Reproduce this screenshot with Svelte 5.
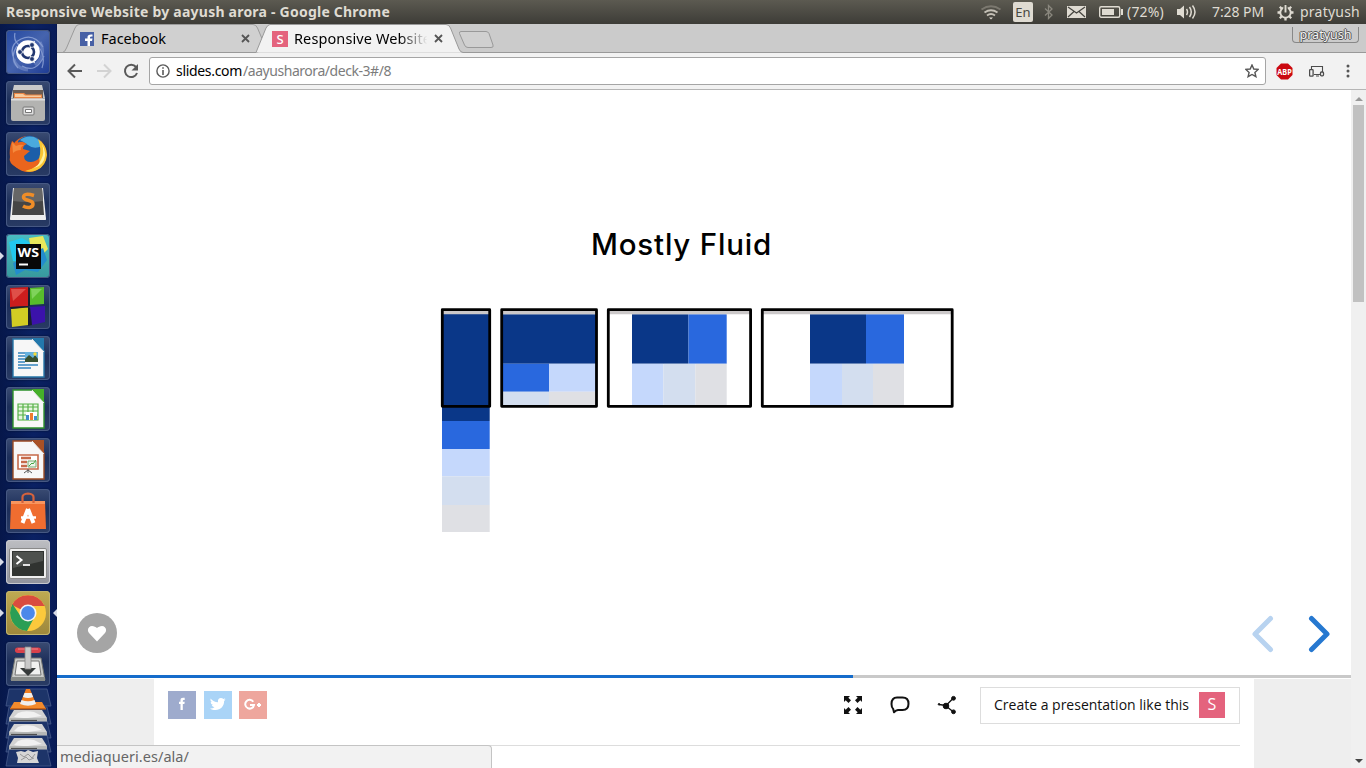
<script>
  // Tightens or loosens tracking so a label fills its slot exactly.
  function fit(node, width) {
    const apply = () => {
      node.style.letterSpacing = '0px';
      const natural = node.getBoundingClientRect().width;
      node.style.letterSpacing = `${(width - natural) / node.textContent.length}px`;
    };
    apply();
    document.fonts?.ready.then(apply);
  }

  const apps = [
    'dash', 'files', 'firefox', 'sublime', 'webstorm', 'blocks', 'writer',
    'calc', 'impress', 'software', 'terminal', 'chrome', 'transmission'
  ];
  const running = ['webstorm', 'terminal', 'chrome'];
</script>

{#snippet doc(edge, fold)}
  <path d="M7 3h20l11 12v26H7z" fill="#f7f7f7" stroke={edge} stroke-width="1.4" />
  <path d="M26 2h12v14z" fill={fold} />
  <path d="M26 3l12 13" stroke="#e6e6e6" stroke-width="1" />
{/snippet}

<div class="desktop">
  <header class="panel">
    <b class="title"><span use:fit={384}>Responsive Website by aayush arora - Google Chrome</span></b>
    <div class="indicators">
      <svg class="wifi" width="22" height="18" viewBox="0 0 22 18" fill="none" stroke-width="1.8">
        <path d="M1.500 6.500Q11 0 20.500 6.500" stroke="#7b786f" />
        <path d="M4.500 9.500Q11 5 17.500 9.500M7 12.500Q11 9.500 15 12.500" stroke="#c5c1b7" />
        <path d="M9 14.500h4l-2 2z" fill="#dfdbd2" />
      </svg>
      <span class="lang">En</span>
      <svg class="bt" width="10" height="16" viewBox="0 0 10 16"><path d="M1 4.500l7 6.500-3.500 3.500V1.500L8 5 1 11.500" fill="none" stroke="#8a877e" stroke-width="1.300" /></svg>
      <svg class="mail" width="19" height="14" viewBox="0 0 19 14"><path d="M0 1h19v12H0z" fill="#dfdbd2" /><path d="M1 2l8.500 6L18 2M1 12l6-5.500M18 12l-6-5.500" fill="none" stroke="#45443f" stroke-width="1.200" /></svg>
      <svg class="batt" width="24" height="14" viewBox="0 0 24 14"><rect x=".7" y="1.700" width="20" height="10.600" rx="1.500" fill="none" stroke="#dfdbd2" stroke-width="1.400" /><path d="M3 4h12v6H3zM22 4h2v6h-2z" fill="#dfdbd2" /></svg>
      <span class="pct"><span use:fit={37}>(72%)</span></span>
      <svg class="vol" width="21" height="16" viewBox="0 0 21 16"><path d="M1 5h3l4-3.500v13L4 11H1z" fill="#dfdbd2" /><path d="M10.500 5q2 3 0 6M13.500 3q3.500 5 0 10M16.500 1.500q5 6.500 0 13" fill="none" stroke="#dfdbd2" stroke-width="1.500" /></svg>
      <span class="clock"><span use:fit={52}>7:28 PM</span></span>
      <svg class="gear" width="17" height="17" viewBox="0 0 17 17" fill="none" stroke="#dfdbd2">
        <circle cx="8.500" cy="8.500" r="5.200" stroke-width="1.900" />
        <path d="M.5 8.500h3M13.500 8.500h3M2.800 2.800l2 2M14.200 2.800l-2 2M2.800 14.200l2-2M14.200 14.200l-2-2M8.500 13v3.500" stroke-width="2.300" />
        <path d="M8.500 0v8" stroke="#4d4c44" stroke-width="4.400" /><path d="M8.500 1v7.500" stroke-width="1.900" />
      </svg>
      <span class="user"><span use:fit={60}>pratyush</span></span>
    </div>
  </header>

  <div class="workspace">
    <nav class="launcher">
      {#each apps as app (app)}
        <div class={['tile', app]}>
          {#if running.includes(app)}<i class="pip"></i>{/if}
          {#if app === 'chrome'}<i class="pip focus"></i>{/if}
          <svg width="44" height="44" viewBox="0 0 44 44">
            {#if app === 'dash'}
              <g fill="none" stroke="#aabce7" opacity=".65">
                <path d="M9 3q-2 9 6 13M8 29Q2 15 15 9t22 8M36 38q4-12-4-22M12 38q-9-11-1-22M16 36q14 8 22-10" stroke-width="1.200" />
                <path d="M34 12q7 13-5 23M8 29q1 9 14 11" stroke-width="3" opacity=".5" />
              </g>
              <circle cx="22" cy="22" r="11.800" fill="#fff" />
              <circle cx="22" cy="22" r="6" fill="none" stroke="#20366f" stroke-width="2.600" />
              <path d="M18 22H10M24 18.500l4.500-7.500M24 25.500l4.500 7.500" stroke="#fff" stroke-width="1.200" />
              <g fill="#20366f" stroke="#fff" stroke-width=".7"><circle cx="14" cy="22" r="2.400" /><circle cx="26" cy="15" r="2.400" /><circle cx="26" cy="29" r="2.400" /></g>
            {:else if app === 'files'}
              <path d="M8 4h28l3 13H5z" fill="#c9c9c9" /><path d="M7 9h30v9H7z" fill="#6a5d55" />
              <path d="M8 12h10l2 1.500h16v5H8z" fill="#e98544" /><path d="M9 13h8l2 1.500h16v1.500H9z" fill="#f8cc9e" />
              <path d="M5 17.500h34V38q0 2-2 2H7q-2 0-2-2z" fill="#b3b3b1" /><path d="M5 17.500h34v2H5z" fill="#dedede" />
              <rect x="17" y="26" width="11" height="8" rx="1" fill="#ddd" stroke="#777" /><path d="M19.500 28.500h6v3h-6z" fill="#fff" stroke="#777" />
            {:else if app === 'firefox'}
              <circle cx="22.500" cy="22" r="18" fill="#e8641c" />
              <path d="M12 9Q18 3 26 4q10 2 12 12 1 9-5 15-8 4-15-2-6-8-6-20z" fill="#1c5ea9" />
              <path d="M14 8q6-5 14-3 7 3 8 9-8 4-14-1-4-3-8-5z" fill="#4aaade" />
              <path d="M32 7q9 6 9 16-1 11-10 15-6 3-12 1 12-3 14-12 3-10-1-20z" fill="#f9c533" />
              <path d="M36 12q3 9-1 16-3 6-9 8 9-1 12-8t-2-16z" fill="#fff2a0" />
              <path d="M6 9l4 3q5-4 9-1l2 1q-4 1-4 5l7 2-6 5q0 6 7 6 6-1 8-4 2 6-4 9-9 6-18 1T4 25q-1-9 2-16z" fill="#ea651d" />
              <path d="M6 10l4 4q4-2 8-1-4 2-3 5-5 0-8 3z" fill="#f58a3d" />
            {:else if app === 'sublime'}
              <path d="M7 5h30l3 31H4z" fill="#eee" /><path d="M8 5h28l2 27H6z" fill="#454545" /><path d="M8 5h28l1 13q-15 2-30 0z" fill="#666" />
              <path d="M28 12.500q-10-3-10.500 1.500c0 4.500 9.500 2 9.500 7 0 4-6 4.500-10 2" fill="none" stroke="#ef8d27" stroke-width="3.500" />
              <path d="M5 33h34l1 4H4z" fill="#ededed" />
            {:else if app === 'webstorm'}
              <path d="M3 8l13-4 12 7-3 18-18-2z" fill="#22c8ee" /><path d="M23 4l14-2 5 13-8 8-9-7z" fill="#e8e85b" />
              <path d="M7 29l30-15 4 12-9 12-13-2-9 5z" fill="#238ccc" />
              <path d="M10 10h25v25H10z" fill="#080808" /><path d="M13 29.500h9v2h-9z" fill="#fff" />
              <text x="11.500" y="23" font-size="13" font-weight="700" textLength="21.500" lengthAdjust="spacingAndGlyphs" fill="#fff">WS</text>
            {:else if app === 'blocks'}
              <path d="M4 3l18-1v19l-18 1z" fill="#cc1d1d" /><path d="M24 3l14-1v17l-14 1z" fill="#58bc2c" />
              <path d="M5 24l17-2v18L6 42z" fill="#d2cd24" /><path d="M24 22l15-1v16l-13 3z" fill="#3b12aa" />
              <path d="M22 2l2 1v18l-2 1zM22 22l2 1 2 17-4 1zM4 22l18-1v1.500L5 24z" fill="#16161c" opacity=".75" />
              <path d="M5 4h15l-13 12z" fill="#eb7168" opacity=".6" /><path d="M25 4h11l-10 10z" fill="#99e27b" opacity=".6" />
            {:else if app === 'writer'}
              {@render doc('#2676a8', '#2378ac')}
              <path d="M12 17h7M12 20h7M12 23h7M12 26h7M12 29h20M12 32h13" stroke="#3585bf" stroke-width="1.700" />
              <path d="M19 16h13v9H19z" fill="#66b2df" /><path d="M19 23l4-4 4 3 2-3 3 4v3H19z" fill="#37502e" /><circle cx="29" cy="18" r="1.700" fill="#f6dc3a" />
            {:else if app === 'calc'}
              {@render doc('#2d912b', '#45af29')}
              <path d="M12 17h20v17H12z" fill="#e7f5e0" /><path d="M12 17h20v16H12zM12 20h20M12 24h20M12 28h20M17 17v16M22 17v16M27 17v16" fill="none" stroke="#55b146" stroke-width="1.200" />
              <path d="M20 25h11v8H20z" fill="#fff" /><path d="M20 33v-5h3v5z" fill="#438bc8" /><path d="M24 33v-7h3v7z" fill="#ef7b30" /><path d="M28 33v-4h3v4z" fill="#4192ce" />
            {:else if app === 'impress'}
              {@render doc('#9a4a24', '#a95126')}
              <path d="M12 17h20v14H12z" fill="#fff" stroke="#c66a4a" stroke-width="1.600" /><path d="M15 20h10M15 24h6M15 28h6" stroke="#c66a4a" stroke-width="2.500" />
              <path d="M22 23h8v6h-8z" fill="#eef6ed" stroke="#76a971" /><path d="M23 28l3-3 1 1 3-4" fill="none" stroke="#48a545" /><path d="M18 35l4-3 4 3M22 31v4" fill="none" stroke="#555" />
            {:else if app === 'software'}
              <path d="M5 12h34l1 28H4z" fill="#ef6d30" /><path d="M5 12h34v3H5z" fill="#f8955e" />
              <path d="M16.500 14V8q0-3 5.500-3.500 5.500.5 5.500 3.500v6" fill="none" stroke="#d5623c" stroke-width="2.200" />
              <path d="M22 20l-5.500 14M22 20l5.500 14" fill="none" stroke="#fff" stroke-width="4" /><path d="M15 28.500h15" stroke="#fff" stroke-width="2.500" />
            {:else if app === 'terminal'}
              <rect x="3.500" y="8.500" width="37" height="30" rx="1.500" fill="#efefef" stroke="#898989" /><path d="M6 11h32v25H6z" fill="#303330" /><path d="M7 12h30v9L7 28z" fill="#4e514e" />
              <path d="M10.500 16l5 4-5 4" fill="none" stroke="#fff" stroke-width="2" /><path d="M17 25h7" stroke="#fff" stroke-width="1.700" />
            {:else if app === 'chrome'}
              <circle cx="22" cy="22" r="18" fill="#fbc93c" />
              <path d="M22 22L6 14A18 18 0 0 1 38 14l1 1H22z" fill="#d94c3f" />
              <path d="M22 22L29 25 21 40A18 18 0 0 1 6.500 13l8 12z" fill="#2b9e55" />
              <circle cx="22" cy="22" r="8.500" fill="#f4f4f4" /><circle cx="22" cy="22" r="6.900" fill="#4b88ea" />
            {:else}
              <path d="M9 16h26l4 22H5z" fill="#c9cac8" stroke="#727370" /><path d="M11 19h22l2 14H9z" fill="#f1f1f0" stroke="#777" />
              <path d="M14 26h16l-8 8z" fill="#363a3a" />
              <rect x="9" y="5.500" width="26" height="5.500" rx="2.700" fill="#d8414b" /><path d="M12 7h20" stroke="#f2868a" />
              <path d="M19 5h6v22h-6z" fill="#c9c9c9" stroke="#888" stroke-width=".8" /><path d="M5 35h34v4H5z" fill="#888b88" />
            {/if}
          </svg>
        </div>
      {/each}
      <svg class="stack" width="57" height="80" viewBox="0 0 57 80">
        {#each [1, 19, 33, 47, 61] as y (y)}
          <path d="M9 {y}h38l4 17H6z" fill="#1d3469" stroke="#485b8a" stroke-width=".8" />
        {/each}
        {#each [50, 36, 22] as y (y)}
          <path d="M14 {y}h28l5 8H9z" fill="#d2d2d2" /><path d="M18 {y + 3}q6-3 16-1l8 4-14 2q-9 0-14-1z" fill="#f1f1f1" /><path d="M9 {y + 8}h38v3.500H9z" fill="#b5b7b6" /><path d="M11 {y + 10.500}h26" stroke="#4e4e4e" stroke-width="1.200" />
        {/each}
        <path d="M16 64l5-1 4 1 3-2 5 2 5-1-1 7 2 5H17l1-5z" fill="#d6d6d6" /><path d="M20 66l4 3 4-3 4 4 3-4M21 72l5-3 3 3 5-2" fill="none" stroke="#979797" />
        <path d="M14 14h28l4 7H10z" fill="#f28a2c" /><path d="M10 20h36v1.500H10z" fill="#ca6314" />
        <path d="M26 1h4l6 15q-8 3.500-16 0z" fill="#f17f22" />
        <path d="M24.500 5h7l1.600 4q-5 2-10.200 0zM21.500 12q6.500 2.500 13 0l1.500 4q-8 3.500-16 0z" fill="#efefef" />
      </svg>
    </nav>

    <main class="browser">
      <div class="tabs">
        <svg class="shapes" width="1309" height="29" viewBox="0 0 1309 29">
          <path d="M5.500 28.500Q8 28 9.500 24L18 4Q19.500.5 22 .5H196Q199 .5 200.500 4L206 17 201 28.500z" fill="#d0d0d0" stroke="#9b9b9b" />
          <path d="M0 28.500H199L209 4Q211 .5 213 .5H389Q392 .5 393.500 4L402 25Q403.500 28.500 406 28.500H1309" fill="#f2f2f2" stroke="#999" />
          <path d="M404 7.500H429Q431 7.500 432 9.500L436 21Q437 23.500 434 23.500H411Q408.500 23.500 407.500 21L402.500 9.500Q402 7.500 404 7.500z" fill="#d0d0d0" stroke="#999" />
        </svg>
        <div class="tab one">
          <svg width="14" height="14" viewBox="0 0 14 14"><path d="M0 0h14v14H0z" fill="#4760a5" /><path d="M7.500 14V9H5V6.500h2.500V5q0-3 5-2.500v2q-2.500-.3-2.500 1v1h2.500L12 9h-2v5z" fill="#fff" /></svg>
          <span class="name"><span use:fit={65}>Facebook</span></span>
          <svg class="x" width="9" height="9" viewBox="0 0 9 9"><path d="M1 1l7 7M8 1L1 8" /></svg>
        </div>
        <div class="tab two">
          <span class="fav">S</span>
          <span class="name faded"><span use:fit={137}>Responsive Website</span></span>
          <svg class="x" width="9" height="9" viewBox="0 0 9 9"><path d="M1 1l7 7M8 1L1 8" /></svg>
        </div>
        <div class="profile"><span use:fit={52}>pratyush</span></div>
      </div>

      <div class="toolbar">
        <svg width="16" height="16" viewBox="0 0 16 16" fill="none" stroke="#5a5a5a" stroke-width="2"><path d="M15 8H2M8 1.500L1.500 8 8 14.500" /></svg>
        <svg class="fwd" width="16" height="16" viewBox="0 0 16 16" fill="none" stroke="#d3d3d3" stroke-width="2"><path d="M1 8h13M8 1.500L14.500 8 8 14.500" /></svg>
        <svg class="reload" width="16" height="16" viewBox="0 0 16 16"><path d="M13 4A6.200 6.200 0 1 0 14 10" fill="none" stroke="#5a5a5a" stroke-width="2" /><path d="M15 1v6.500H8.500z" fill="#5a5a5a" /></svg>
        <div class="omnibox">
          <svg width="14" height="14" viewBox="0 0 14 14"><circle cx="7" cy="7" r="6.100" fill="none" stroke="#5a5a5a" stroke-width="1.400" /><path d="M6.200 3.200h1.600v1.600H6.200zM6.200 6h1.600v5H6.200z" fill="#5a5a5a" /></svg>
          <span class="host"><span use:fit={66}>slides.com</span></span><span class="path"><span use:fit={148}>/aayusharora/deck-3#/8</span></span>
          <svg class="star" width="14" height="14" viewBox="0 0 14 14"><path d="M7 1l1.800 4 4.400.4-3.300 3 1 4.300L7 10.500l-3.900 2.200 1-4.300-3.300-3L5.200 5z" fill="none" stroke="#555" stroke-width="1.400" /></svg>
        </div>
        <svg class="abp" width="17" height="17" viewBox="0 0 17 17"><path d="M5 .5h7l4.500 4.500v7L12 16.500H5L.5 12V5z" fill="#cb0810" /><text x="1.300" y="11.800" font-size="9" font-weight="700" textLength="14.400" lengthAdjust="spacingAndGlyphs" fill="#fff">ABP</text></svg>
        <svg class="devices" width="16" height="13" viewBox="0 0 16 13" fill="none" stroke="#4c4c4c"><path d="M2.500 4V1.500h11V7M5 9.500h6M7 11h3" stroke-width="1.100" /><rect x=".6" y="4.600" width="3.500" height="6.500" rx=".7" stroke-width="1.300" /><rect x="11.500" y="7" width="3" height="3.800" rx="1" stroke-width="1.300" /></svg>
        <svg class="dots" width="4" height="14" viewBox="0 0 4 14" fill="#555"><circle cx="2" cy="2" r="1.500" /><circle cx="2" cy="7" r="1.500" /><circle cx="2" cy="12" r="1.500" /></svg>
      </div>

      <div class="viewport">
        <div class="page">
          <section class="slide">
            <h1><span use:fit={181}>Mostly Fluid</span></h1>
            <svg class="diagram" width="514" height="226" viewBox="440 307 514 226">
              <g fill="#0a3788">
                <path d="M442 314h47.700v107H442zM502 314.300h94v49.400h-94zM632 314.300h56.500v49.400h-56.500zM810 314.300h56v49.400h-56z" />
              </g>
              <path d="M442 421h47.700v28H442zM502 363.700h47v28h-47zM688.500 314.300h38.200v49.400h-38.200zM866 314.300h38v49.400h-38z" fill="#2968de" />
              <path d="M442 449h47.700v27.300H442zM549 363.700h47v28h-47zM632 363.700h31.300V405H632zM810 363.700h32V405h-32z" fill="#c5d8fc" />
              <path d="M442 476.300h47.700v28.700H442zM502 391.700h47V405h-47zM663.300 363.700h32V405h-32zM842 363.700h31V405h-31z" fill="#d3deef" />
              <path d="M442 505h47.700v27H442zM549 391.700h47V405h-47zM695.300 363.700h31.400V405h-31.400zM873 363.700h31V405h-31z" fill="#dfe0e4" />
              <path d="M443 311h46v3.300h-46zM502 311h94v3.300h-94zM609 311h142v3.300H609zM763 311h189v3.300H763z" fill="#cbc8c9" />
              <g fill="none" stroke="#000" stroke-width="2.800" stroke-linejoin="round">
                <path d="M442.300 309.700h47.400v96.600h-47.400zM501.700 309.700h94.800v96.600h-94.800zM608.300 309.700h142.300v96.600H608.300zM762.300 309.700h189.900v96.600H762.300z" />
              </g>
            </svg>
            <div class="like"><svg width="20" height="18" viewBox="0 0 20 18"><path d="M10 17.500L2 9C-.7 5.500 2 2 5 2c2 0 3.800 1 5 2 1.200-1 3-2 5-2 3 0 5.700 3.500 3 7z" fill="#fff" /></svg></div>
            <svg class="arrows" width="78" height="40" viewBox="0 0 78 40" fill="none" stroke-width="5" stroke-linecap="round" stroke-linejoin="round"><path d="M18.500 4.500L3 20l15.500 15.500" stroke="#b8d3f0" /><path d="M59.500 4.500L75 20 59.500 35.500" stroke="#2678d0" /></svg>
          </section>
          <div class="progress"><div class="done"></div></div>
          <div class="below">
            <div class="sheet">
              <div class="row">
                <div class="social">
                  <svg width="28" height="28" viewBox="0 0 28 28"><path d="M0 0h28v28H0z" fill="#9eabcd" /><path d="M12.500 19v-6H11v-2.300h1.500V9q0-2.300 2.600-2.300h1.600V9h-1q-.9 0-.9.900v.8h1.900l-.3 2.300h-1.600v6z" fill="#fff" /></svg>
                  <svg class="tw" width="28" height="28" viewBox="0 0 28 28"><path d="M0 0h28v28H0z" fill="#aad4f7" /><path d="M6.500 7.500q3 3.500 7.500 3.700c-.5-2.600 1-4.200 3-4.200 1 0 1.700.4 2.300 1l2-.8-1.200 1.600 1.500-.4-1.500 1.600c.2 5-3.600 9-8.600 9-2.200 0-4-.5-5.500-1.500q2.500.2 4.500-1.300-2.100-.3-2.800-2.200h1.300q-2.400-.8-2.400-3.200l1.300.4q-2-1.600-1.400-3.700z" fill="#fff" /></svg>
                  <svg width="28" height="28" viewBox="0 0 28 28"><path d="M0 0h28v28H0z" fill="#eea69d" /><path d="M14.300 10.700A4.400 4.400 0 1 0 15 14h-4M18 14h4M20 12v4" fill="none" stroke="#fff" stroke-width="2" /></svg>
                </div>
                <div class="actions">
                  <svg width="20" height="20" viewBox="0 0 20 20" fill="#111"><path d="M1 1h6L5.300 2.700 8 5.300 5.500 8 2.700 5.300 1 7zM19 1h-6l1.700 1.700L12 5.300 14.500 8l2.800-2.700L19 7zM1 19h6l-1.700-1.700L8 14.700 5.500 12l-2.800 2.700L1 13zM19 19h-6l1.700-1.700-2.700-2.600 2.500-2.700 2.800 2.700L19 13z" /></svg>
                  <svg width="20" height="20" viewBox="0 0 20 20"><path d="M7 2.500h5.500q6 0 6 6.200T12.500 15H8q-2 .2-4 2.200l-.8-3.200Q1.500 12.500 1.500 9q0-6.500 5.500-6.500z" fill="none" stroke="#111" stroke-width="2" stroke-linejoin="round" /></svg>
                  <svg width="20" height="20" viewBox="0 0 20 20" fill="#111" stroke="#111"><path d="M2 9.500l7 1L16.500 3M9 11l7.500 6" fill="none" stroke-width="1.300" /><circle cx="9" cy="11" r="2.800" /><circle cx="16.500" cy="3.300" r="1.900" /><circle cx="16.500" cy="16.800" r="1.900" /><circle cx="2" cy="9.300" r=".8" /></svg>
                </div>
                <div class="create"><span class="cta"><span use:fit={195}>Create a presentation like this</span></span><span class="logo">S</span></div>
              </div>
            </div>
          </div>
        </div>
        <div class="scrollbar"><i class="up"></i><div class="thumb"></div><i class="down"></i></div>
        <div class="status"><span use:fit={129}>mediaqueri.es/ala/</span></div>
      </div>
    </main>
  </div>
</div>

<style>
  :global(body) { margin: 0; overflow: hidden; }
  .desktop { width: 1366px; height: 768px; display: flex; flex-direction: column; font: 14.5px/20px "Noto Sans", sans-serif; overflow: hidden; }
  .desktop :global(svg) { flex: none; display: block; }
  span { white-space: nowrap; }
  span > span { display: inline-block; }
  .panel { height: 24px; flex: none; display: flex; align-items: center; justify-content: space-between; color: #dfdbd2; background: linear-gradient(#5c5a51, #3d3c37); padding: 0 6px 0 6px; box-sizing: border-box; }
  .title { font-size: 14px; }
  .indicators { display: flex; align-items: center; font-size: 14px; }
  .lang { width: 20px; height: 20px; margin-left: 11px; border-radius: 2px; background: #dfdbd2; color: #494841; text-align: center; font-size: 13px; line-height: 20px; }
  .bt { margin-left: 11px; }
  .mail { margin-left: 13px; }
  .batt { margin-left: 13px; }
  .pct { width: 37px; margin-left: 4px; }
  .vol { margin-left: 12px; }
  .clock { width: 52px; margin-left: 15px; }
  .gear { margin-left: 13px; }
  .user { width: 60px; margin-left: 6px; }

  .workspace { flex: 1; min-height: 0; display: flex; }
  .launcher { width: 57px; flex: none; box-sizing: border-box; padding-top: 6px; display: flex; flex-direction: column; align-items: center; gap: 7px; background: linear-gradient(90deg, #06174a, #0a2163 60%, #081b57); border-right: 1px solid #06174c; }
  .tile { position: relative; width: 44px; height: 44px; flex: none; border-radius: 4px; background: linear-gradient(#3a4b72, #1c2e5a 45%, #293b64); box-shadow: inset 0 0 0 1px #465883, 0 0 2px #03102f; }
  .dash { background: linear-gradient(135deg, #2549a2, #4664ae 50%, #1d3b94); }
  .webstorm { background: linear-gradient(#49bcc2, #37999d); }
  .terminal { background: linear-gradient(#bdbec2, #91939c); box-shadow: inset 0 0 0 1px #c7c8cf; }
  .chrome { background: linear-gradient(#bfaa52, #9d873b); box-shadow: inset 0 0 0 1px #c2b46d; }
  .pip { position: absolute; left: -6px; top: 18px; border: 4px solid transparent; border-left-color: #d8dce8; border-right: 0; }
  .pip.focus { left: auto; right: -7px; border-left: 0; border-right: 4px solid #d8dce8; }
  .stack { margin-top: -5px; }

  .browser { flex: 1; min-width: 0; display: flex; flex-direction: column; }
  .tabs { position: relative; height: 29px; flex: none; display: flex; background: #cbcbcb; }
  .shapes { position: absolute; inset: 0; }
  .tab { position: relative; display: flex; align-items: center; box-sizing: border-box; height: 29px; }
  .one { width: 199px; padding-left: 23px; }
  .two { width: 205px; padding-left: 16px; }
  .name { margin-left: 7px; margin-top: -2px; }
  .one .name { width: 141px; }
  .two .name { width: 139px; margin-left: 6px; }
  .faded { mask-image: linear-gradient(90deg, #000 76%, transparent 96%); }
  .fav, .logo { background: #e4637d; color: #fff; text-align: center; font-weight: 500; }
  .fav { width: 16px; height: 16px; line-height: 16px; font-size: 13px; }
  .x { stroke: #555; stroke-width: 1.8; margin-top: -1px; }
  .two .x { margin-left: 1px; }
  .one .x { margin-left: -1px; }
  .profile { position: absolute; right: 7px; top: 3px; width: 67px; height: 16px; box-sizing: border-box; border: 1px solid #888; border-top: 0; border-radius: 0 0 4px 4px; text-align: center; font-size: 12.5px; line-height: 16px; color: #f3f3f3; text-shadow: 1px 0 #555, -1px 0 #555, 0 1px #555, 0 -1px #555; }

  .toolbar { height: 37px; flex: none; box-sizing: border-box; border-bottom: 1px solid #b5b5b5; background: #f2f2f2; display: flex; align-items: center; padding: 0 16px 0 10px; }
  .fwd { margin-left: 13px; }
  .reload { margin-left: 11px; }
  .omnibox { margin-left: 10px; width: 1117px; height: 28px; box-sizing: border-box; border: 1px solid #a5a5a5; border-radius: 3px; background: #fff; display: flex; align-items: center; padding: 0 6px; font-size: 14px; }
  .host { width: 67px; margin-left: 6px; }
  .path { color: #7c7c7c; }
  .star { margin-left: auto; }
  .abp { margin-left: 10px; }
  .devices { margin-left: 16px; }
  .dots { margin-left: auto; }

  .viewport { position: relative; flex: 1; min-height: 0; display: flex; background: #fff; }
  .page { width: 1294px; display: flex; flex-direction: column; }
  .slide { position: relative; height: 585px; flex: none; }
  h1 { margin: 0; padding: 135px 0 0 534px; font: 500 29.5px/39px Inter, sans-serif; height: 39px; }
  h1 span { display: inline-block; }
  .diagram { margin: 43px 0 0 383px; }
  .like { position: absolute; left: 20px; bottom: 22px; width: 40px; height: 40px; border-radius: 50%; background: #a5a5a5; display: flex; align-items: center; justify-content: center; }
  .arrows { position: absolute; right: 21px; bottom: 21px; }
  .progress { height: 3px; flex: none; background: #c9c9c9; }
  .done { width: 796px; height: 3px; background: #156ccb; }
  .below { flex: 1; margin-top: 1px; background: #eee; padding: 0 97px; }
  .sheet { height: 89px; background: #fff; padding: 0 14px; }
  .row { height: 66px; display: flex; border-bottom: 1px solid #ddd; }
  .social { display: flex; gap: 7px; padding-top: 12px; }
  .tw { margin-left: 1px; }
  .actions { display: flex; gap: 27px; margin-left: auto; padding-top: 16px; }
  .create { margin: 8px 0 0 23px; width: 260px; height: 37px; box-sizing: border-box; border: 1px solid #ddd; display: flex; align-items: center; padding: 0 14px 0 13px; justify-content: space-between; font-family: "Open Sans", sans-serif; font-size: 14px; color: #111; }
  .cta { margin-top: -2px; }
  .logo { width: 26px; height: 26px; line-height: 24px; font-size: 16px; margin-top: -1px; }
  .scrollbar { width: 15px; background: #f0f0f0; display: flex; flex-direction: column; align-items: center; padding-top: 7px; box-sizing: border-box; }
  .up { border: 4px solid transparent; border-bottom-color: #999; border-top: 0; }
  .thumb { width: 11px; height: 197px; margin-top: 4px; background: #c1c1c1; }
  .down { margin: auto 0 5px; border: 4px solid transparent; border-top-color: #444; border-bottom: 0; }
  .status { position: absolute; left: 0; bottom: 0; width: 435px; height: 23px; box-sizing: border-box; padding-left: 3px; border-top: 1px solid #c4c4c4; border-right: 1px solid #c4c4c4; border-top-right-radius: 4px; background: #f2f2f2; color: #666; line-height: 20px; }
  .profile span, .status span { display: inline-block; }
</style>
